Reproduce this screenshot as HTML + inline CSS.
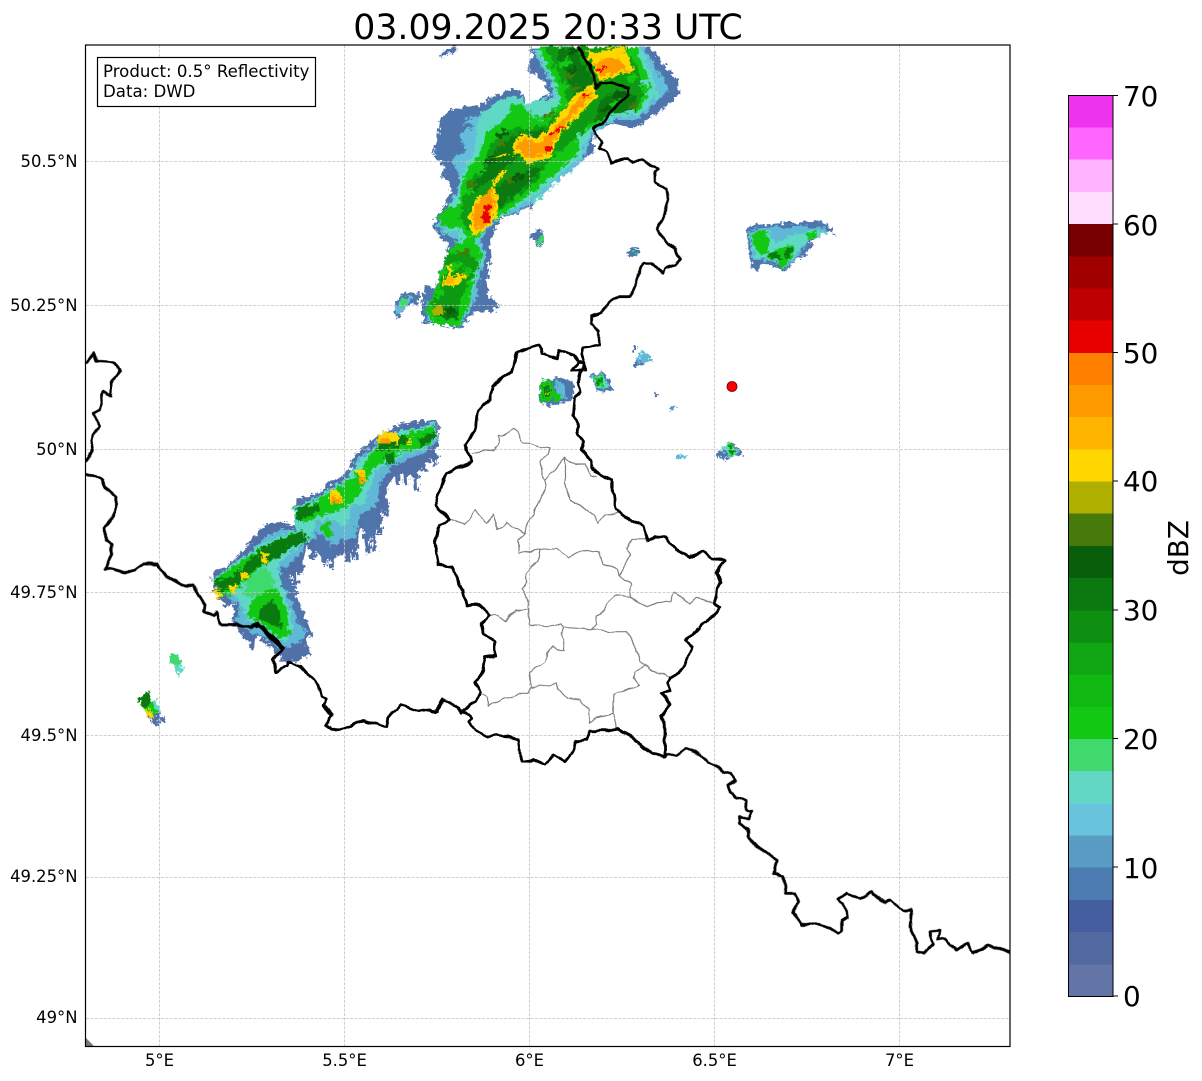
<!DOCTYPE html>
<html><head><meta charset="utf-8"><style>
html,body{margin:0;padding:0;background:#fff}
svg{display:block}
text{font-family:"DejaVu Sans","Liberation Sans",sans-serif;fill:#000}
.t{font-size:16.4px}
.b{font-size:16.6px}
.c{font-size:27.8px}
.grey polyline{fill:none;stroke:#808080;stroke-width:3.6;stroke-linejoin:round}
.blk polyline{fill:none;stroke:#000;stroke-width:8.4;stroke-linejoin:round;stroke-linecap:round}
.s path{fill:none;stroke-linecap:butt}
</style></head><body>
<svg width="1202" height="1081" viewBox="0 0 1202 1081" xmlns="http://www.w3.org/2000/svg">
<defs>
<clipPath id="ax"><rect x="86" y="45" width="924" height="1001"/></clipPath>
<filter id="j" filterUnits="userSpaceOnUse" x="0" y="0" width="1202" height="1081" color-interpolation-filters="sRGB">
<feTurbulence type="fractalNoise" baseFrequency="0.2" numOctaves="2" seed="4"/>
<feComponentTransfer result="n">
<feFuncR type="discrete" tableValues=".15 .35 .5 .65 .85"/>
<feFuncG type="discrete" tableValues=".15 .35 .5 .65 .85"/>
<feFuncA type="table" tableValues="1 1"/>
</feComponentTransfer>
<feDisplacementMap in="SourceGraphic" in2="n" scale="12" xChannelSelector="R" yChannelSelector="G"/>
</filter>
<filter id="w" filterUnits="userSpaceOnUse" x="0" y="0" width="1202" height="1081" color-interpolation-filters="sRGB">
<feTurbulence type="fractalNoise" baseFrequency="0.11" numOctaves="1" seed="9" result="n"/>
<feDisplacementMap in="SourceGraphic" in2="n" scale="5" xChannelSelector="R" yChannelSelector="G"/>
</filter>
</defs>
<rect width="1202" height="1081" fill="#fff"/>
<text x="548" y="39" text-anchor="middle" style="font-size:34.7px">03.09.2025 20:33 UTC</text>

<g clip-path="url(#ax)">
<!-- radar -->
<g filter="url(#j)">
<g transform="translate(380 40) scale(.33333)">
<polygon fill="#5270A8" points="178,40 210,22 236,20 225,35 190,50"/>
<polygon fill="#4F75AD" points="445,20 460,45 440,85 470,110 495,130 510,165 470,180 440,190 420,150 395,150 340,170 300,195 260,200 210,210 180,240 175,290 160,340 190,380 190,410 215,440 200,490 175,520 155,560 190,600 210,620 180,700 165,740 135,735 125,800 130,845 190,855 235,865 265,835 280,820 330,815 360,795 325,770 320,720 335,650 330,600 360,540 385,530 450,500 500,450 550,410 600,370 640,335 645,270 700,250 760,265 800,240 860,200 895,165 895,120 860,85 845,60 810,20"/>
<polygon fill="#62BEDA" points="460,30 480,70 510,120 520,170 450,195 410,170 350,190 300,225 250,240 240,290 260,330 215,360 240,420 215,490 190,520 165,555 200,585 230,600 190,700 170,760 140,790 140,840 235,860 270,810 290,770 300,700 320,640 300,600 350,540 420,510 480,470 540,420 610,360 625,310 640,280 700,240 770,240 840,180 870,140 830,90 810,50 790,20"/>
<polygon fill="#5FD8C4" points="465,30 510,110 530,170 440,190 400,165 340,190 290,240 285,330 250,390 230,470 185,525 190,560 240,580 200,680 170,760 150,800 150,845 235,860 265,810 285,730 310,640 290,600 345,540 410,500 490,450 550,400 610,345 615,305 640,270 700,230 780,225 835,160 815,100 795,50 780,20"/>
<polygon fill="#12C812" points="470,20 520,110 545,190 480,240 440,210 400,180 380,230 320,280 300,340 260,390 240,470 205,500 175,530 190,560 230,560 270,590 215,620 190,680 160,760 135,810 160,850 235,860 250,830 270,790 280,720 305,640 285,600 340,540 400,500 480,440 540,390 600,330 590,290 640,260 700,220 780,210 815,130 790,80 765,20"/>
<polygon fill="#0E9A12" points="495,20 540,110 565,190 490,260 420,260 340,290 310,370 260,430 250,490 240,540 270,575 330,530 400,480 470,420 520,350 580,300 620,260 680,220 730,180 770,200 790,160 785,120 770,80 740,20"/>
<polygon fill="#0A7A10" points="530,50 560,100 590,190 500,270 420,280 350,320 330,370 290,420 270,470 300,440 340,420 380,380 450,320 520,290 560,230 620,180 640,110 600,60 590,25 540,25"/>
<polygon fill="#0A7A10" points="660,180 710,150 770,170 760,215 700,220 640,250"/>
<polygon fill="#0A7A10" points="350,440 400,410 470,380 490,380 440,440 370,490 350,510"/>
<polygon fill="#0E9A12" points="200,620 210,640 270,640 300,680 270,720 240,780 230,830 170,830 150,790 180,740 200,680"/>
<polygon fill="#0A7A10" points="170,795 235,805 238,835 170,835"/>
<g class="s">
<path stroke="#12C812" stroke-width="18" d="M330,300L360,280M380,265L410,255M430,265L465,250M290,400L310,385M260,460L280,450M540,80L570,60M535,150L560,135M720,50L755,40M740,120L770,110M690,200L720,180M210,690L240,670M250,700L275,690M170,770L190,750"/>
<path stroke="#085E0A" stroke-width="18" d="M350,290L385,270M320,370L345,350M430,360L470,330M400,420L430,400M560,40L590,30M570,100L590,85M700,170L740,160M660,215L690,200M480,300L510,285M195,815L225,815"/>
<path stroke="#467A0A" stroke-width="14" d="M558,110L588,100M490,230L520,220M355,320L375,305M380,425L395,415M265,440L285,430M575,150L595,140M745,200L770,195M230,645L270,632M240,710L255,700"/>
<path stroke="#4F75AD" stroke-width="18" d="M240,270L280,250M210,240L250,225M200,310L235,295M770,250L790,240M830,190L860,170"/>
<path stroke="#5FD8C4" stroke-width="14" d="M205,500L240,480M390,190L430,180M455,490L490,465M780,130L815,120M190,580L225,570"/>
</g>
<polygon fill="#FFD700" points="615,30 650,40 690,28 730,20 765,90 700,110 660,125 640,85"/>
<polygon fill="#FFD700" points="640,130 650,170 600,220 560,260 525,310 515,350 470,365 440,375 420,340 335,355 375,340 400,345 400,310 430,280 470,295 505,270 545,215 580,170"/>
<polygon fill="#FFD700" points="360,390 340,430 320,470 290,470 265,530 275,590 330,560 355,510 350,470 345,440 380,390"/>
<polygon fill="#FFD700" points="205,675 215,680 212,710 225,705 256,700 250,725 215,740 190,735 195,715"/>
<polygon fill="#AFAF00" points="160,795 190,795 190,828 160,825"/>
<polygon fill="#FF9900" points="640,70 690,50 720,60 745,90 700,100 660,110"/>
<polygon fill="#FF9900" points="625,150 640,165 590,215 555,255 520,300 505,335 470,350 430,345 410,315 430,295 475,310 505,285 550,235 590,185"/>
<polygon fill="#FF9900" points="335,440 345,490 330,545 290,575 275,545 290,495"/>
<polygon fill="#FFB400" points="200,712 228,712 222,732 195,732"/>
<polygon fill="#E60000" points="650,88 680,78 682,84 655,94"/>
<polygon fill="#E60000" points="608,160 622,158 620,168 610,170"/>
<polygon fill="#E60000" points="505,282 550,255 553,262 510,288"/>
<polygon fill="#E60000" points="495,320 510,318 515,335 500,335"/>
<polygon fill="#E60000" points="318,490 332,495 325,530 332,545 315,550 305,530 315,510"/>
<polygon fill="#4F75AD" points="45,785 75,755 120,760 115,790 80,800 48,845"/>
<polygon fill="#62BEDA" points="50,800 78,765 95,770 85,795 55,825"/>
<polygon fill="#3FD96E" points="65,775 82,770 80,795 65,805"/>
<polygon fill="#4F75AD" points="450,580 480,565 490,590 492,605 475,618 455,595"/>
<polygon fill="#3FD96E" points="468,600 490,590 485,610 472,612"/>
<polygon fill="#4F75AD" points="742,635 760,628 780,632 765,648 752,650"/>
<polygon fill="#3FC8A0" points="755,634 775,632 765,644"/>
</g>

<g transform="translate(130 410) scale(.33333)">
<polygon fill="#5270A8" points="245,485 290,470 345,420 395,350 440,335 495,345 500,265 550,260 600,220 660,180 670,140 740,80 815,40 915,30 930,60 915,140 880,165 860,200 800,190 770,230 760,300 740,320 745,360 715,380 690,350 680,420 640,430 605,450 580,440 550,425 530,410 515,470 495,500 470,490 510,580 545,670 525,700 545,730 505,755 460,755 420,710 380,680 365,710 330,670 305,620 315,580 295,590 265,570 245,520"/>
<g class="s">
<path stroke="#5270A8" stroke-width="15" d="M880,130L885,185M910,110L915,170M855,160L860,245M825,160L830,220M800,160L805,225M760,210L770,320M745,290L750,375M725,330L735,425M705,330L715,430M670,390L680,450M650,390L655,455M600,410L605,475M580,410L582,465M545,400L550,450M510,430L515,495M495,460L498,525M430,670L470,750M370,650L365,715M350,650L360,695"/>
</g>
<polygon fill="#5FB8D6" points="250,520 300,480 350,440 400,380 450,360 500,360 500,290 550,280 610,240 665,190 680,150 745,95 825,70 915,50 925,90 880,130 825,150 780,175 750,220 740,280 720,300 690,310 675,380 640,390 600,410 560,390 530,380 510,430 480,460 440,490 470,520 500,600 530,670 500,700 450,720 420,690 370,670 320,630 330,590 290,560"/>
<polygon fill="#4F75AD" points="440,490 475,485 510,580 525,640 510,650 480,570"/>
<polygon fill="#4F75AD" points="690,320 740,300 745,360 715,390 695,360"/>
<polygon fill="#4F75AD" points="560,370 590,385 615,430 580,450 555,415"/>
<polygon fill="#5FD8C4" points="245,515 310,460 400,400 500,360 490,295 555,265 640,215 680,160 745,100 750,70 830,60 915,40 925,80 880,120 820,130 780,165 740,180 700,290 670,280 650,350 600,330 560,330 540,390 480,430 440,470 470,570 490,640 475,690 440,690 400,650 350,630 340,590 300,540"/>
<polygon fill="#12C812" points="400,545 440,530 470,600 480,680 440,680 395,640 350,620 370,570"/>
<polygon fill="#12C812" points="570,340 600,340 610,380 580,370"/>
<polygon fill="#12C812" points="500,300 560,270 640,225 690,180 740,110 830,70 915,50 900,110 820,125 770,150 730,170 690,250 650,290 620,300 570,320 520,340"/>
<polygon fill="#12C812" points="250,515 310,470 400,410 500,365 530,385 470,420 420,450 370,490 310,550 280,560"/>
<polygon fill="#3FD96E" points="350,510 400,470 430,500 430,530 380,560 345,560"/>
<polygon fill="#0A7A10" points="245,515 300,500 340,470 400,410 460,385 520,362 535,395 480,410 450,440 400,460 350,500 310,540 270,540"/>
<polygon fill="#0A7A10" points="495,295 560,280 570,300 530,320 505,335"/>
<polygon fill="#0A7A10" points="745,100 800,80 830,80 840,100 770,120 745,125"/>
<polygon fill="#0A7A10" points="860,90 895,70 925,60 910,90 880,110"/>
<polygon fill="#0A7A10" points="765,135 790,130 795,160 770,165"/>
<polygon fill="#0A7A10" points="390,600 430,570 450,610 455,660 420,640 385,625"/>
<polygon fill="#FFD700" points="250,540 275,540 280,565 262,568"/>
<polygon fill="#FFD700" points="295,530 320,525 315,550 305,552"/>
<polygon fill="#FFD700" points="330,480 355,490 350,505 335,505"/>
<polygon fill="#FFD700" points="390,430 420,430 410,455 395,455"/>
<polygon fill="#FFD700" points="600,240 620,240 640,265 625,280 600,280"/>
<polygon fill="#FFD700" points="680,180 705,180 708,215 690,218"/>
<polygon fill="#FFD700" points="745,70 800,65 805,100 745,100"/>
<polygon fill="#FFD700" points="830,80 845,85 845,105 830,105"/>
<polygon fill="#FF9900" points="750,85 780,85 780,100 750,100"/>
<polygon fill="#FF9900" points="605,260 635,262 625,278 605,280"/>
<polygon fill="#FF9900" points="682,195 705,195 705,215 690,218"/>
</g>

<g transform="translate(120 640) scale(.33333)">
<polygon fill="#5FD8C4" points="145,50 170,40 195,98 175,107 160,75"/>
<polygon fill="#3FD96E" points="145,50 170,40 182,70 160,78"/>
<polygon fill="#5270A8" points="90,225 120,215 137,240 128,248 115,232 118,255 108,260 88,235"/>
<polygon fill="#5FD8C4" points="95,185 105,180 122,212 100,222"/>
<polygon fill="#12C812" points="52,175 85,155 110,215 85,235 70,210"/>
<polygon fill="#0A7A10" points="52,175 85,155 97,185 68,205"/>
<polygon fill="#FFD700" points="70,205 85,200 97,230 85,235"/>
</g>

<g transform="translate(430 340) scale(.33333)">
<polygon fill="#4F75AD" points="335,120 400,112 430,130 425,190 390,190 360,198 328,185 325,160"/>
<polygon fill="#5FB8D6" points="375,125 400,125 410,175 385,180"/>
<polygon fill="#12C812" points="338,120 370,125 370,150 395,160 395,185 370,180 345,190 328,165"/>
<polygon fill="#0A7A10" points="340,140 360,145 360,170 345,170"/>
<polygon fill="#AFAF00" points="345,152 355,152 355,165 345,165"/>
<polygon fill="#4F75AD" points="483,108 515,93 540,115 550,150 530,158 500,150"/>
<polygon fill="#5FD8C4" points="488,115 515,100 535,130 520,150 500,140"/>
<polygon fill="#12C812" points="495,115 515,108 520,135 505,140"/>
<polygon fill="#0A7A10" points="503,118 512,118 512,132 503,132"/>
<polygon fill="#4F75AD" points="605,18 618,18 618,32 607,32"/>
<polygon fill="#4F75AD" points="605,68 625,58 650,72 625,80 610,78"/>
<polygon fill="#5FB8D6" points="622,42 645,35 663,60 645,72 628,65"/>
<polygon fill="#4F75AD" points="670,157 682,155 687,165 678,166"/>
<polygon fill="#5A9CC3" points="712,200 730,195 738,202 722,210"/>
<polygon fill="#5FB8D6" points="742,350 752,340 768,352 758,365"/>
<polygon fill="#4F75AD" points="862,335 885,325 900,305 920,315 940,340 920,352 900,350 875,362"/>
<polygon fill="#5FD8C4" points="880,320 900,308 930,335 905,350 885,340"/>
<polygon fill="#12C812" points="888,318 905,308 915,335 900,345"/>
<polygon fill="#0A7A10" points="893,320 903,315 908,335 900,338"/>
</g>

<g transform="translate(620 210) scale(.33333)">
<polygon fill="#4F75AD" points="378,65 400,45 520,38 600,35 630,50 650,80 620,65 580,90 555,140 530,145 495,185 465,170 430,160 410,185 395,165 385,130 385,90"/>
<polygon fill="#5FB8D6" points="385,65 410,55 520,48 610,50 625,65 580,80 545,130 495,175 460,155 420,150 400,150 390,100"/>
<polygon fill="#5FD8C4" points="390,70 440,58 465,100 520,75 600,60 615,70 570,90 535,125 495,178 460,150 410,145 395,110"/>
<polygon fill="#12C812" points="395,70 435,60 450,90 440,130 420,130 400,110"/>
<polygon fill="#12C812" points="440,130 480,115 520,105 525,125 490,180 465,150 440,140"/>
<polygon fill="#12C812" points="555,75 590,65 590,80 565,90"/>
<polygon fill="#0A7A10" points="440,130 470,125 490,150 470,150"/>
<polygon fill="#0A7A10" points="490,125 520,110 520,125 495,145"/>
<polygon fill="#4F75AD" points="22,125 40,115 62,122 45,130 30,138"/>
<polygon fill="#3FD96E" points="38,120 50,120 45,130"/>
</g>
</g>

<!-- grid -->
<g stroke="#c2c2c2" stroke-width="0.8" stroke-dasharray="3 1.4" fill="none">
<path d="M159.5 45V1046M344.5 45V1046M529.5 45V1046M714.5 45V1046M899.5 45V1046"/>
<path d="M86 161.5H1010M86 305.5H1010M86 449.5H1010M86 592.5H1010M86 735.5H1010M86 877.5H1010M86 1018.5H1010"/>
</g>
<polygon fill="#777" points="86,1038 94,1046 86,1046"/>

<g filter="url(#w)">
<!-- canton lines -->
<g class="grey">
<g transform="translate(430 340) scale(.33333)">
<polyline points="125,340 150,335 190,330 205,315 205,285 215,290 255,265 280,305 325,320 360,325 355,345 330,360 335,400 345,420 375,390 405,350 405,430 420,480 455,500 490,525 505,550 525,525 565,518"/>
<polyline points="345,420 345,450 320,490 310,525 290,550 285,580 250,560 230,548 205,570 190,525 170,550 138,512 105,553 65,540"/>
<polyline points="405,350 435,375 465,370 480,405 500,410"/>
</g>
<g transform="translate(430 520) scale(.33333)">
<polyline points="285,40 265,60 268,100 330,88 380,85 415,112 455,90 505,95 520,130 560,148 570,165 605,195 600,232 655,260 680,248 720,245 735,218 780,252 800,232 855,250"/>
<polyline points="570,165 600,100 590,85 605,58 650,58 650,70"/>
<polyline points="330,88 325,120 290,160 290,185 275,205 295,245 295,268 260,270 225,302 195,282 178,285"/>
<polyline points="295,268 298,312 350,320 395,310 400,322 440,325 485,328 540,335 590,335 610,370 630,420 645,435"/>
<polyline points="600,232 555,225 520,268 500,290 498,315 485,328"/>
<polyline points="400,322 395,345 405,390 385,385 370,378 350,400 345,425 300,460 305,500 295,520 270,520 190,550 175,560 170,530 155,520"/>
<polyline points="305,505 380,490 385,510 415,535 450,540 480,570 475,610 495,595 548,580 558,625"/>
<polyline points="548,580 550,525 590,510 630,495 610,475 615,455 645,435 680,460 700,460 718,475"/>
</g>
</g>

<!-- borders -->
<g class="blk">
<g transform="translate(380 40) scale(.33333)">
<polyline points="595,20 612,50 630,75 640,110 650,135 650,145 660,130 700,130 745,145 745,165 715,190 700,210 665,250 640,265 645,285 665,305 660,325 680,335 695,370 720,360 745,355 760,365 790,360 810,375 835,385 825,395 825,425 860,445 865,480 855,510 850,535 830,570 860,605 885,625 900,655 885,675 855,685 850,700 815,670 790,670 775,700 765,740 745,770 715,770 685,790 665,820 635,830 635,850 655,875 655,900"/>
</g>
<g transform="translate(430 340) scale(.33333)">
<polyline points="505,0 510,15 490,20 460,25 455,45 465,70 450,100 445,130 450,155 435,175 430,225 445,260 445,285 460,305 455,330 470,350 485,360 485,385 495,395 515,405 545,420 545,455 555,480 555,505 585,530 610,545 640,560 650,590 655,605 675,590 705,590 740,630 775,650 820,635 845,655 870,660 885,660 870,680 860,700 870,725 860,745 855,790 870,803 860,815 830,845 800,870 770,900"/>
<polyline points="175,825 150,795 110,795 100,755 65,680 25,675 15,610 28,555 60,540 15,495 50,400 90,380 125,365 105,315 140,265 145,210 180,180 190,135 245,95 262,35 325,15 335,40 380,55 390,30 430,45 445,65 425,90 465,90 465,70 445,65"/>
</g>
<g transform="translate(430 520) scale(.33333)">
<polyline points="770,365 785,380 765,435 745,460 720,475 710,490 720,515 695,520 720,550 695,590 705,630 705,715"/>
<polyline points="800,325 770,365"/>
<polyline points="705,710 670,700 630,675 605,650 565,625 530,632 480,632 470,660 440,665 425,700 405,725 370,705 345,735 310,720 280,725 270,700 265,660 235,648 200,645 175,650 135,630 115,605 125,595 110,575 95,575"/>
<polyline points="0,570 15,578 40,540 85,565 95,580"/>
<polyline points="95,575 135,545 150,515 135,485 155,465 165,410 195,405 195,365 160,340 155,315 175,285"/>
</g>
<g transform="translate(80 340) scale(.33333)">
<polyline points="18,70 40,40 50,62 100,65 122,92 95,125 93,170 70,155 60,210 38,220 60,260 40,285 35,335 18,360"/>
<polyline points="18,402 65,415 75,440 108,470 105,515 75,565 78,600 95,610 95,640 78,685 90,685 135,698 165,690 190,672 232,672 258,708 315,740 338,733 375,795 372,815 400,825 410,815 420,855 470,855 510,862 535,852 600,925"/>
</g>
<g transform="translate(130 410) scale(.33333)">
<polyline points="380,650 400,650 460,715 430,745 435,785 470,770 475,755 510,770 565,825 575,860 590,865 580,885 605,915 585,945 605,960 645,955 700,930 750,945 770,950 775,920 815,885 865,905 895,900 920,905"/>
</g>
<g transform="translate(640 740) scale(.33333)">
<polyline points="0,15 40,40 75,55 80,45 110,45 138,25 180,45 205,68 225,75 250,95 270,100 287,122 265,135 270,155 290,175 320,180 318,210 337,212 325,240 300,228 295,250 325,270 325,290 350,320 410,358 402,400 430,410 435,460 465,460 478,488 458,515 485,555 530,548 595,578 605,570 605,540 625,530 610,490 595,475 620,458 660,478 695,455 735,490 750,480 790,512 815,510 810,560 830,610 830,635 850,642 880,612 868,575 900,572 895,595 915,598 950,630 980,610 998,638 1045,615 1090,630 1110,638"/>
</g>
</g>
</g>

<circle cx="732" cy="386.5" r="5" fill="#f00" stroke="#600" stroke-width="0.8"/>
</g>

<rect x="85.5" y="45" width="924.5" height="1001.5" fill="none" stroke="#000" stroke-width="1.2"/>
<rect x="97.5" y="57.5" width="218" height="49" fill="#fff" stroke="#000" stroke-width="1.2"/>
<text x="103" y="77" class="b">Product: 0.5° Reflectivity</text>
<text x="103" y="97" class="b">Data: DWD</text>

<!-- tick labels -->
<g text-anchor="end">
<text x="77.5" y="167" class="t">50.5°N</text>
<text x="77.5" y="311" class="t">50.25°N</text>
<text x="77.5" y="455" class="t">50°N</text>
<text x="77.5" y="598" class="t">49.75°N</text>
<text x="77.5" y="741" class="t">49.5°N</text>
<text x="77.5" y="882" class="t">49.25°N</text>
<text x="77.5" y="1023" class="t">49°N</text>
</g>
<g text-anchor="middle">
<text x="159.5" y="1066" class="t">5°E</text>
<text x="344.5" y="1066" class="t">5.5°E</text>
<text x="529.5" y="1066" class="t">6°E</text>
<text x="714.5" y="1066" class="t">6.5°E</text>
<text x="899.5" y="1066" class="t">7°E</text>
</g>

<!-- colorbar -->
<g shape-rendering="crispEdges">
<rect x="1068.5" y="963.8" width="44.5" height="32.7" fill="#6374A6"/>
<rect x="1068.5" y="931.6" width="44.5" height="32.7" fill="#52699F"/>
<rect x="1068.5" y="899.4" width="44.5" height="32.7" fill="#445E9F"/>
<rect x="1068.5" y="867.2" width="44.5" height="32.7" fill="#4C7BB1"/>
<rect x="1068.5" y="835" width="44.5" height="32.7" fill="#5A9CC3"/>
<rect x="1068.5" y="802.9" width="44.5" height="32.7" fill="#68C3DC"/>
<rect x="1068.5" y="770.7" width="44.5" height="32.7" fill="#62D8C4"/>
<rect x="1068.5" y="738.5" width="44.5" height="32.7" fill="#3FD96E"/>
<rect x="1068.5" y="706.3" width="44.5" height="32.7" fill="#12C812"/>
<rect x="1068.5" y="674.1" width="44.5" height="32.7" fill="#10B812"/>
<rect x="1068.5" y="641.9" width="44.5" height="32.7" fill="#10A512"/>
<rect x="1068.5" y="609.8" width="44.5" height="32.7" fill="#0D8E10"/>
<rect x="1068.5" y="577.6" width="44.5" height="32.7" fill="#0A7A10"/>
<rect x="1068.5" y="545.4" width="44.5" height="32.7" fill="#085E0A"/>
<rect x="1068.5" y="513.2" width="44.5" height="32.7" fill="#467A0A"/>
<rect x="1068.5" y="481" width="44.5" height="32.7" fill="#AFAF00"/>
<rect x="1068.5" y="448.8" width="44.5" height="32.7" fill="#FFD700"/>
<rect x="1068.5" y="416.7" width="44.5" height="32.7" fill="#FFB400"/>
<rect x="1068.5" y="384.5" width="44.5" height="32.7" fill="#FF9900"/>
<rect x="1068.5" y="352.3" width="44.5" height="32.7" fill="#FF8000"/>
<rect x="1068.5" y="320.1" width="44.5" height="32.7" fill="#E60000"/>
<rect x="1068.5" y="287.9" width="44.5" height="32.7" fill="#BE0000"/>
<rect x="1068.5" y="255.8" width="44.5" height="32.7" fill="#A00000"/>
<rect x="1068.5" y="223.6" width="44.5" height="32.7" fill="#780000"/>
<rect x="1068.5" y="191.4" width="44.5" height="32.7" fill="#FFDDFF"/>
<rect x="1068.5" y="159.2" width="44.5" height="32.7" fill="#FFB3FF"/>
<rect x="1068.5" y="127" width="44.5" height="32.7" fill="#FF66FF"/>
<rect x="1068.5" y="95" width="44.5" height="32.5" fill="#EE33EE"/>
</g>
<rect x="1068.5" y="95.5" width="44.5" height="901" fill="none" stroke="#000" stroke-width="1"/>
<path d="M1113 95.5h5M1113 224h5M1113 352.5h5M1113 481h5M1113 610h5M1113 738.5h5M1113 867h5M1113 996h5" stroke="#000" stroke-width="1" fill="none"/>
<text x="1123" y="106" class="c">70</text>
<text x="1123" y="235" class="c">60</text>
<text x="1123" y="363" class="c">50</text>
<text x="1123" y="491" class="c">40</text>
<text x="1123" y="620" class="c">30</text>
<text x="1123" y="749" class="c">20</text>
<text x="1123" y="878" class="c">10</text>
<text x="1123" y="1006" class="c">0</text>
<text transform="translate(1188 548) rotate(-90)" text-anchor="middle" class="c">dBZ</text>
</svg>
</body></html>
